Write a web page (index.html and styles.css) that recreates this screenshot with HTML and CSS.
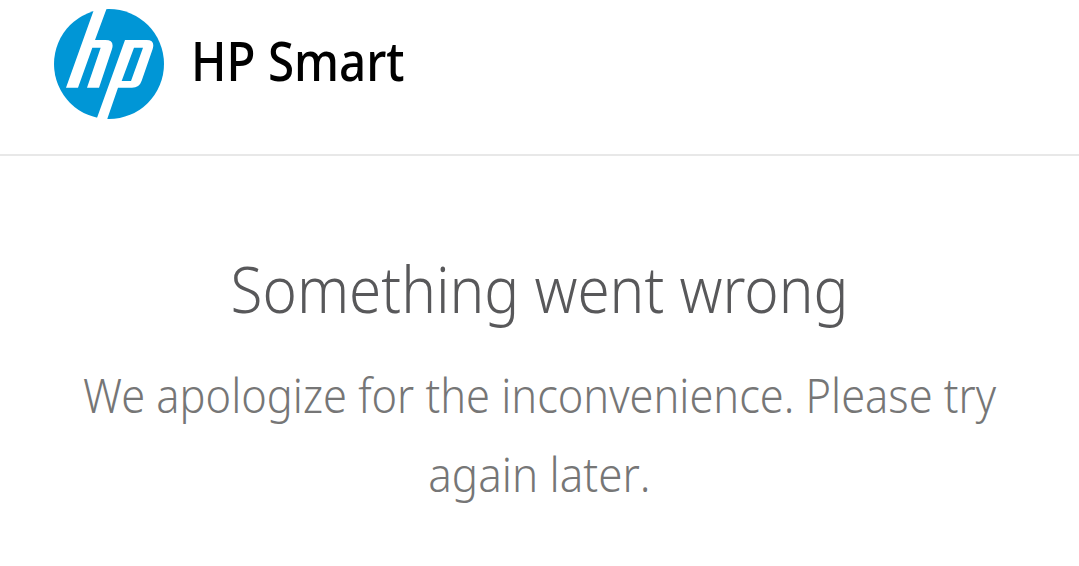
FILE: index.html
```html
<!DOCTYPE html>
<html lang="en">
<head>
<meta charset="utf-8">
<title>HP Smart</title>
<link rel="stylesheet" href="styles.css">
</head>
<body>
<header class="header">
  <svg class="logo" viewBox="30 27 330 330" role="img" aria-label="HP">
    <circle cx="195" cy="192" r="165" fill="#0096d6"/>
    <path fill="#fff" d="M153 20H190L153 120H184Q212 120 204 147L165 263H129L170 143H145L102 263H66Z"/>
    <path fill="#fff" fill-rule="evenodd" d="M243 120H308Q334 120 326 147L293 242Q286 263 264 263H222L187 365H155ZM270 143L233 243H261L297 143Z"/>
  </svg>
  <span class="brand">HP Smart</span>
</header>
<main class="content">
  <h1 class="title">Something went wrong</h1>
  <p class="message">
    <span class="line line-first">We apologize for the inconvenience. Please try</span>
    <span class="line line-last">again later.</span>
  </p>
</main>
</body>
</html>
```
FILE: styles.css
```css
body {
  margin: 0;
  background: #fff;
  font-family: "Noto Sans", "Open Sans", sans-serif;
  overflow-x: hidden;
}
.header {
  display: flex;
  align-items: center;
  gap: 28px;
  box-sizing: border-box;
  height: 156px;
  padding: 9px 54px 35px;
  border-bottom: 2px solid #e8e8e8;
}
.logo {
  width: 110px;
  height: 110px;
  flex: none;
}
.brand {
  color: #000;
  font-size: 54px;
  line-height: 64px;
  font-weight: 480;
  margin-top: -9px;
  margin-left: -1px;
  transform: scaleX(0.88);
  transform-origin: left center;
}
.content {
  padding: 89px 0 0;
  text-align: center;
}
.title {
  margin: 0;
  color: #58585a;
  font-size: 64px;
  line-height: 88px;
  font-weight: 300;
  transform: scaleX(0.912);
}
.message {
  display: flex;
  flex-direction: column;
  align-items: center;
  margin: 22px 0 0;
  color: #767676;
  font-size: 48px;
  line-height: 79px;
  font-weight: 300;
}
.line {
  white-space: nowrap;
}
.line-first {
  transform: scaleX(0.903);
}
.line-last {
  font-kerning: none;
  transform: scaleX(0.915);
}
```
